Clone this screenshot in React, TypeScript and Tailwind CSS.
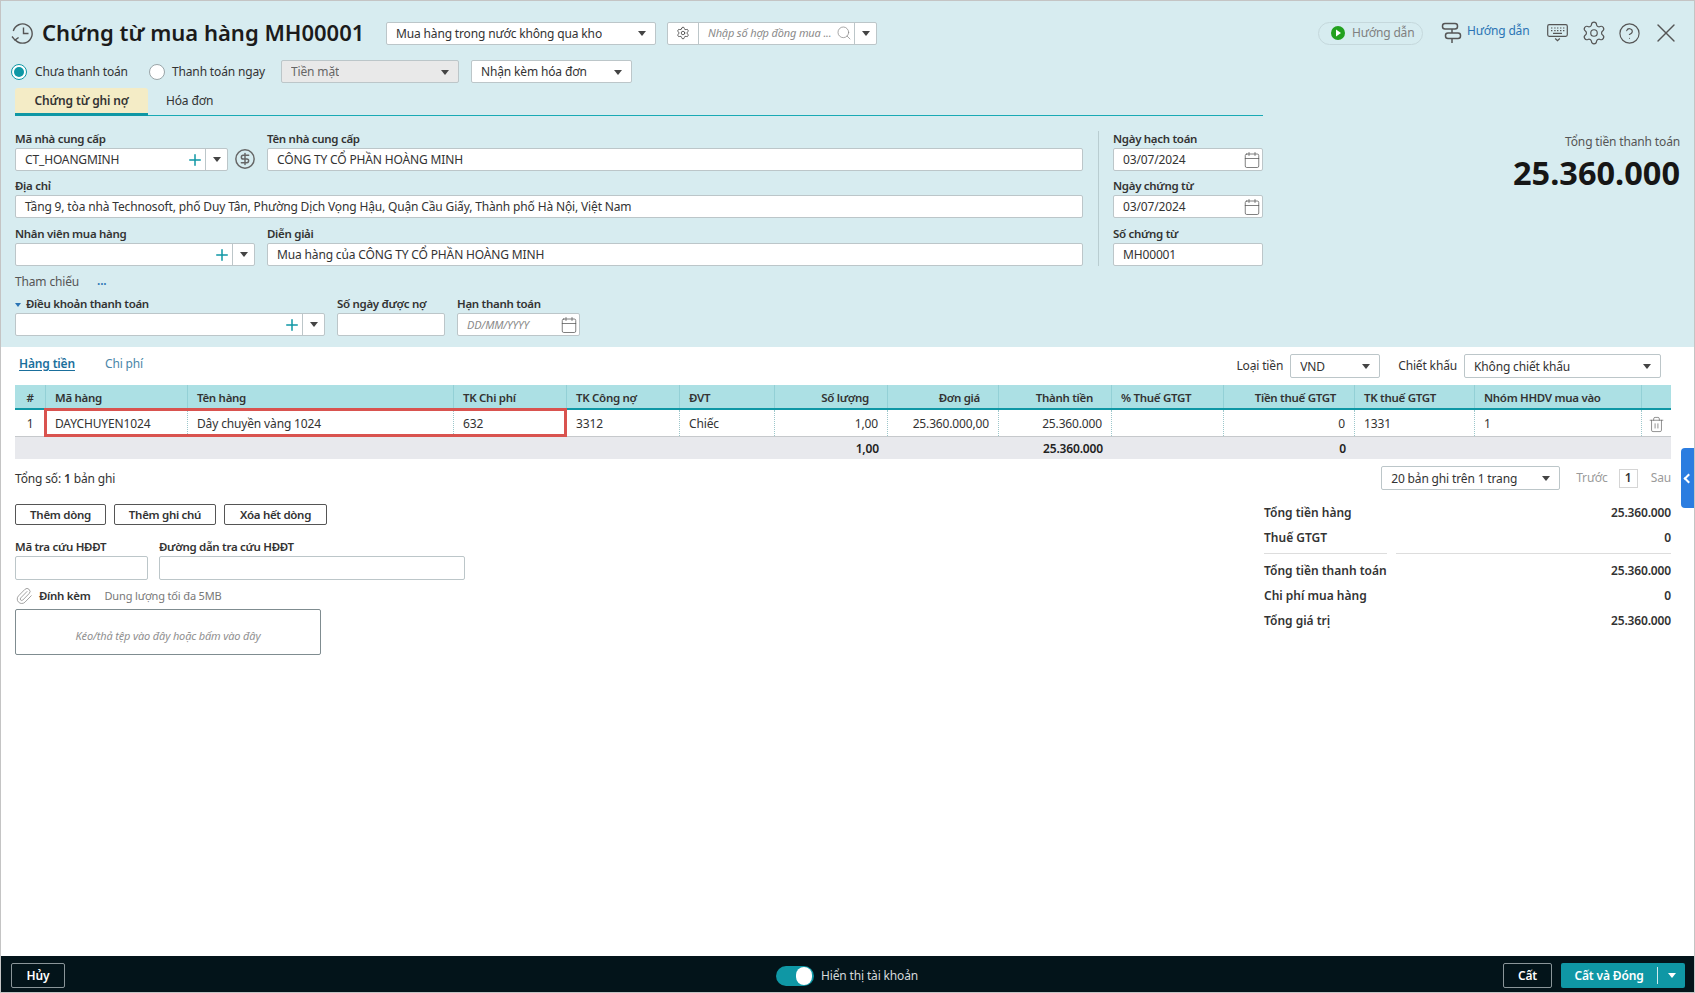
import React, { ReactNode } from "react";
import { Calendar, CircleDollarSign, CircleHelp, Paperclip, Plus, Search, Settings, Trash2, X } from "lucide-react";

const caret = "h-0 w-0 border-x-[4px] border-t-[5px] border-x-transparent border-t-[#444]";

function Caret() {
  return <span className={caret} />;
}

function Label({ children }: { children: ReactNode }) {
  return <div className="h-[17px] -translate-y-px text-[11.5px] leading-[17px] font-semibold tracking-[-0.3px] whitespace-nowrap text-[#333]">{children}</div>;
}

function Box({ className = "", children }: { className?: string; children?: ReactNode }) {
  return (
    <div className={`flex h-[23px] items-center rounded-[2px] border border-[#bcc6c9] bg-white pt-px pl-[9px] text-[#333] ${className}`}>
      {children}
    </div>
  );
}

function SelectBox({ className = "", children }: { className?: string; children: ReactNode }) {
  return (
    <Box className={`justify-between pr-[9px] ${className}`}>
      <span className="truncate">{children}</span>
      <Caret />
    </Box>
  );
}

// combo with the teal plus and a dropdown part on the right
function AddCombo({ className = "", value }: { className?: string; value?: string }) {
  return (
    <Box className={`!pt-0 pr-0 ${className}`}>
      <span className="flex-1 pt-px">{value}</span>
      <Plus size={18} strokeWidth={2} className="mr-[1px] text-[#0f97a5]" />
      <span className="flex h-full w-[22px] items-center justify-center border-l border-[#bcc6c9]">
        <Caret />
      </span>
    </Box>
  );
}

function DateBox({ value, className = "" }: { value?: string; className?: string }) {
  return (
    <Box className={`justify-between pr-[1px] ${className}`}>
      {value ? <span>{value}</span> : <span className="text-[11px] text-[#8a8a8a] italic">DD/MM/YYYY</span>}
      <Calendar size={18} strokeWidth={1} className="text-[#555]" />
    </Box>
  );
}

function HistoryIcon() {
  return (
    <svg width="23" height="22" viewBox="0 0 23 22" fill="none" stroke="#555" strokeWidth="1.4" className="shrink-0">
      <path d="M4 17.5A9.6 9.6 0 1 0 2.3 9" />
      <path d="M1 14.5l3 3.6 3.6-2.6" />
      <path d="M12.5 5.5v6h5" />
    </svg>
  );
}

function SignpostIcon() {
  return (
    <svg width="21" height="22" viewBox="0 0 21 22" fill="none" stroke="#555" strokeWidth="1.5" className="shrink-0">
      <rect x="1.5" y="1.5" width="15" height="5.5" rx="2.5" />
      <rect x="4.5" y="11" width="15" height="5.5" rx="2.5" />
      <path d="M11 7v4M11 16.5V21" />
    </svg>
  );
}

function KeyboardIcon() {
  return (
    <svg width="21" height="18" viewBox="0 0 21 18" fill="none" stroke="#555" strokeWidth="1.2" className="shrink-0">
      <rect x="0.7" y="0.7" width="19.6" height="11.6" rx="1.5" />
      <path d="M4 4h1.4M7.2 4h1.4M10 4h1.4M13 4h1.4M16 4h1.4M4 6.6h1.4M7.2 6.6h1.4M10 6.6h1.4M13 6.6h1.4M16 6.6h1.4M6 9.3h9" />
      <path d="M8.2 14.5l2.3 2.2 2.3-2.2" />
    </svg>
  );
}

function PlayIcon() {
  return (
    <svg width="14" height="14" viewBox="0 0 14 14" className="shrink-0">
      <circle cx="7" cy="7" r="7" fill="#23a11f" />
      <path d="M5 3.6l5 3.4-5 3.4z" fill="#fff" />
    </svg>
  );
}

const columns = [
  { title: "#", value: "1", total: "", align: "center" },
  { title: "Mã hàng", value: "DAYCHUYEN1024", total: "", align: "left" },
  { title: "Tên hàng", value: "Dây chuyền vàng 1024", total: "", align: "left" },
  { title: "TK Chi phí", value: "632", total: "", align: "left" },
  { title: "TK Công nợ", value: "3312", total: "", align: "left" },
  { title: "ĐVT", value: "Chiếc", total: "", align: "left" },
  { title: "Số lượng", value: "1,00", total: "1,00", align: "right" },
  { title: "Đơn giá", value: "25.360.000,00", total: "", align: "right" },
  { title: "Thành tiền", value: "25.360.000", total: "25.360.000", align: "right" },
  { title: "% Thuế GTGT", value: "", total: "", align: "left" },
  { title: "Tiền thuế GTGT", value: "0", total: "0", align: "right" },
  { title: "TK thuế GTGT", value: "1331", total: "", align: "left" },
  { title: "Nhóm HHDV mua vào", value: "1", total: "", align: "left" },
  { title: "", value: "", total: "", align: "center" },
];

const gridCols = "grid grid-cols-[31px_142px_266px_113px_113px_95px_113px_111px_113px_112px_131px_120px_167px_29px]";

function alignClass(align: string) {
  if (align === "right") return "justify-end pr-[9px]";
  if (align === "center") return "justify-center";
  return "justify-start pl-[9px]";
}

function headAlignClass(align: string) {
  if (align === "right") return "justify-end pr-[18px]";
  return alignClass(align);
}

function GoodsTable() {
  return (
    <div className="relative mt-[7px] w-[1656px]">
      <div className={`${gridCols} h-[25px] border-b-2 border-[#0f97a5] bg-[#ace0e4]`}>
        {columns.map((c) => (
          <div key={c.title} className={`flex items-center border-r border-[#93d0d6] pt-[2px] text-[11.5px] font-semibold tracking-[-0.3px] text-[#333] last:border-r-0 ${headAlignClass(c.align)}`}>
            {c.title}
          </div>
        ))}
      </div>
      <div className={`${gridCols} h-[27px] border-b border-[#c6c9cc]`}>
        {columns.map((c, i) => (
          <div key={c.title} className={`flex items-center border-r border-dotted border-[#9cc7cb] pt-[2px] text-[#333] last:border-r-0 ${alignClass(c.align)}`}>
            {i === 13 ? <Trash2 size={17} strokeWidth={1} className="text-[#666]" /> : c.value}
          </div>
        ))}
      </div>
      <div className={`${gridCols} h-[22px] bg-[#e8e9ed]`}>
        {columns.map((c) => (
          <div key={c.title} className={`flex items-center pt-px font-semibold text-[#222] ${alignClass(c.align)}`}>
            {c.total}
          </div>
        ))}
      </div>
      {/* red annotation around the edited cells */}
      <div className="absolute top-[23px] left-[29px] h-[29px] w-[523px] border-[3px] border-[#d9534f]" />
    </div>
  );
}

function SummaryRow({ label, value }: { label: string; value: string }) {
  return (
    <div className="flex h-[25px] items-center justify-between font-semibold text-[#333]">
      <span className="tracking-normal">{label}</span>
      <span>{value}</span>
    </div>
  );
}

function OutlineButton({ children, className = "" }: { children: ReactNode; className?: string }) {
  return (
    <button className={`flex h-[21px] items-center justify-center rounded-[2px] border border-[#555] bg-white pt-px text-[11.5px] font-semibold tracking-[-0.3px] text-[#333] ${className}`}>
      {children}
    </button>
  );
}

export default function App() {
  return (
    <div className="flex h-[993px] w-[1695px] flex-col overflow-hidden border border-[#c4c4c4] font-['Noto_Sans',sans-serif] text-[12px] tracking-[-0.15px] text-[#333]">
      <header className="h-[346px] shrink-0 bg-[#d7ecf0]">
        <div className="mt-[21px] flex h-[22px] items-center pr-[12px] pl-[10px]">
          <HistoryIcon />
          <h1 className="ml-[8px] w-[344px] -translate-y-px text-[22px] leading-none font-semibold tracking-normal whitespace-nowrap text-[#1b1b1b]">Chứng từ mua hàng MH00001</h1>
          <SelectBox className="w-[270px]">Mua hàng trong nước không qua kho</SelectBox>
          <div className="ml-[11px] flex h-[23px] w-[210px] items-center rounded-[2px] border border-[#bcc6c9] bg-white">
            <span className="flex h-full w-[31px] items-center justify-center border-r border-[#bcc6c9]">
              <Settings size={14} strokeWidth={1.4} className="text-[#444]" />
            </span>
            <span className="flex-1 pl-[9px] text-[11px] whitespace-nowrap text-[#8a8a8a] italic">Nhập số hợp đồng mua ...</span>
            <Search size={16} strokeWidth={1.1} className="mr-[2px] shrink-0 text-[#888]" />
            <span className="flex h-full w-[22px] shrink-0 items-center justify-center border-l border-[#bcc6c9]">
              <Caret />
            </span>
          </div>
          <div className="ml-auto flex items-center">
            <div className="flex h-[23px] w-[105px] items-center rounded-full border border-[#c5d8dc] pl-[12px] text-[#808080]">
              <PlayIcon />
              <span className="ml-[7px]">Hướng dẫn</span>
            </div>
            <span className="ml-[18px]"><SignpostIcon /></span>
            <span className="ml-[5px] w-[62px] -translate-y-[2px] whitespace-nowrap text-[#2a74b5]">Hướng dẫn</span>
            <span className="ml-[18px]"><KeyboardIcon /></span>
            <Settings size={26} strokeWidth={1.1} className="ml-[13px] text-[#555]" />
            <CircleHelp size={23} strokeWidth={1.2} className="ml-[11px] text-[#555]" />
            <X size={32} strokeWidth={1} className="ml-[9px] text-[#555]" />
          </div>
        </div>

        <div className="mt-[16px] flex h-[23px] items-center pl-[10px]">
          <span className="flex h-4 w-4 items-center justify-center rounded-full border border-[#0f97a5] bg-white">
            <span className="h-[10px] w-[10px] rounded-full bg-[#0f97a5]" />
          </span>
          <span className="ml-[8px] w-[114px]">Chưa thanh toán</span>
          <span className="h-4 w-4 rounded-full border border-[#9aa5a8] bg-white" />
          <span className="ml-[7px] w-[109px]">Thanh toán ngay</span>
          <SelectBox className="w-[178px] !bg-[#e9e9e9] !text-[#666]">Tiền mặt</SelectBox>
          <SelectBox className="ml-[12px] w-[161px]">Nhận kèm hóa đơn</SelectBox>
        </div>

        <div className="flex">
          <div className="ml-[14px] w-[1248px]">
            <div className="mt-[5px] flex h-[28px] border-b border-[#19aab5]">
              <div className="flex h-[28px] w-[133px] items-center justify-center rounded-t-[3px] border-b-[3px] border-[#0f97a5] bg-[#f4ecc6] font-semibold">Chứng từ ghi nợ</div>
              <div className="ml-[18px] flex h-[26px] items-center">Hóa đơn</div>
            </div>

            <div className="mt-[15px] flex">
              <div className="flex w-[1068px] flex-col gap-[7px]">
                <div className="flex">
                  <div className="w-[213px]">
                    <Label>Mã nhà cung cấp</Label>
                    <AddCombo value="CT_HOANGMINH" />
                  </div>
                  <div className="flex w-[39px] items-end justify-start pb-[1px] pl-[6px]">
                    <CircleDollarSign size={22} strokeWidth={1.6} className="text-[#666]" />
                  </div>
                  <div className="flex-1">
                    <Label>Tên nhà cung cấp</Label>
                    <Box>CÔNG TY CỔ PHẦN HOÀNG MINH</Box>
                  </div>
                </div>
                <div>
                  <Label>Địa chỉ</Label>
                  <Box>Tầng 9, tòa nhà Technosoft, phố Duy Tân, Phường Dịch Vọng Hậu, Quận Cầu Giấy, Thành phố Hà Nội, Việt Nam</Box>
                </div>
                <div className="mt-px flex">
                  <div className="w-[240px]">
                    <Label>Nhân viên mua hàng</Label>
                    <AddCombo />
                  </div>
                  <div className="ml-[12px] flex-1">
                    <Label>Diễn giải</Label>
                    <Box>Mua hàng của CÔNG TY CỔ PHẦN HOÀNG MINH</Box>
                  </div>
                </div>
              </div>
              <div className="ml-[15px] border-l border-[#b9cdd1]" />
              <div className="ml-[14px] flex w-[150px] flex-col gap-[7px]">
                <div>
                  <Label>Ngày hạch toán</Label>
                  <DateBox value="03/07/2024" />
                </div>
                <div>
                  <Label>Ngày chứng từ</Label>
                  <DateBox value="03/07/2024" />
                </div>
                <div className="mt-px">
                  <Label>Số chứng từ</Label>
                  <Box>MH00001</Box>
                </div>
              </div>
            </div>

            <div className="mt-[6px] flex h-[20px] items-center">
              <span className="w-[82px] text-[#555]">Tham chiếu</span>
              <span className="-translate-y-[1px] font-semibold text-[#2a74b5]">...</span>
            </div>

            <div className="mt-[4px] flex">
              <div className="w-[310px]">
                <div className="flex items-center">
                  <span className="mr-[5px] h-0 w-0 border-x-[3px] border-t-[4px] border-x-transparent border-t-[#2a74b5]" />
                  <Label>Điều khoản thanh toán</Label>
                </div>
                <AddCombo />
              </div>
              <div className="ml-[12px] w-[108px]">
                <Label>Số ngày được nợ</Label>
                <Box />
              </div>
              <div className="ml-[12px] w-[123px]">
                <Label>Hạn thanh toán</Label>
                <DateBox />
              </div>
            </div>
          </div>

          <div className="flex-1 pt-[50px] pr-[14px] text-right">
            <div className="leading-[18px] text-[#555]">Tổng tiền thanh toán</div>
            <div className="mt-[4px] text-[32.5px] leading-[36px] font-bold tracking-normal text-[#161616]">25.360.000</div>
          </div>
        </div>
      </header>

      <main className="relative flex-1 bg-white pr-[23px] pl-[14px]">
        <div className="mt-[7px] flex h-[24px] items-center">
          <span className="ml-[4px] -translate-y-[2px] font-semibold text-[#1a6f9c] underline underline-offset-2">Hàng tiền</span>
          <span className="ml-[30px] -translate-y-[2px] text-[#4a86a8]">Chi phí</span>
          <div className="ml-auto flex items-center pr-[10px]">
            <span>Loại tiền</span>
            <SelectBox className="ml-[7px] !h-[24px] w-[90px]">VND</SelectBox>
            <span className="ml-[18px]">Chiết khấu</span>
            <SelectBox className="ml-[7px] !h-[24px] w-[197px]">Không chiết khấu</SelectBox>
          </div>
        </div>

        <GoodsTable />

        <div className="mt-[7px] flex h-[24px] items-center">
          <span className="pt-[2px]">Tổng số: <b className="font-semibold">1</b> bản ghi</span>
          <div className="ml-auto flex items-center">
            <SelectBox className="!h-[24px] w-[179px]">20 bản ghi trên 1 trang</SelectBox>
            <span className="ml-[16px] text-[#9a9a9a]">Trước</span>
            <span className="ml-[11px] flex h-[19px] w-[19px] items-center justify-center border border-[#d5d5d5] font-semibold">1</span>
            <span className="ml-[13px] text-[#9a9a9a]">Sau</span>
          </div>
        </div>

        <div className="flex justify-between">
          <div className="pt-[14px]">
            <div className="flex gap-[8px]">
              <OutlineButton className="w-[91px]">Thêm dòng</OutlineButton>
              <OutlineButton className="w-[102px]">Thêm ghi chú</OutlineButton>
              <OutlineButton className="w-[103px]">Xóa hết dòng</OutlineButton>
            </div>
            <div className="mt-[14px] flex gap-[11px]">
              <div className="w-[133px]">
                <Label>Mã tra cứu HĐĐT</Label>
                <Box className="!h-[24px]" />
              </div>
              <div className="w-[306px]">
                <Label>Đường dẫn tra cứu HĐĐT</Label>
                <Box className="!h-[24px]" />
              </div>
            </div>
            <div className="mt-[8px] flex h-[16px] items-center">
              <Paperclip size={18} strokeWidth={1.2} className="text-[#999]" />
              <span className="ml-[6px] text-[11.5px] font-semibold tracking-[-0.3px]">Đính kèm</span>
              <span className="ml-[14px] text-[11px] text-[#777]">Dung lượng tối đa 5MB</span>
            </div>
            <div className="mt-[5px] flex h-[46px] w-[306px] items-center justify-center rounded-[2px] border border-[#7f8c90] pt-[8px] text-[11px] text-[#8f8f8f] italic">
              Kéo/thả tệp vào đây hoặc bấm vào đây
            </div>
          </div>

          <div className="w-[407px] pt-[10px]">
            <SummaryRow label="Tổng tiền hàng" value="25.360.000" />
            <SummaryRow label="Thuế GTGT" value="0" />
            <div className="mt-[3px] mb-[4px] flex justify-between">
              <span className="h-px w-[123px] bg-[#ddd]" />
              <span className="h-px w-[275px] bg-[#ddd]" />
            </div>
            <SummaryRow label="Tổng tiền thanh toán" value="25.360.000" />
            <SummaryRow label="Chi phí mua hàng" value="0" />
            <SummaryRow label="Tổng giá trị" value="25.360.000" />
          </div>
        </div>

        {/* collapsed side panel handle */}
        <div className="absolute top-[101px] right-0 flex h-[60px] w-[13px] items-center justify-center rounded-l-[4px] bg-[#2b7de0] text-white">
          <span className="h-[7px] w-[7px] translate-x-[1px] rotate-45 border-b-2 border-l-2 border-white" />
        </div>
      </main>

      <footer className="flex h-[36px] shrink-0 items-center bg-[#03141a] pt-[3px] pr-[9px] pl-[10px]">
        <button className="flex h-[25px] w-[54px] items-center justify-center rounded-[2px] border border-[#8a9599] font-semibold text-white">Hủy</button>
        <div className="ml-[711px] flex items-center">
          <span className="flex h-[20px] w-[38px] items-center justify-end rounded-full bg-[#0f97a5] pr-[2px]">
            <span className="h-[18px] w-[16px] rounded-full bg-white" />
          </span>
          <span className="ml-[7px] text-[#d5d9da]">Hiển thị tài khoản</span>
        </div>
        <button className="ml-auto flex h-[25px] w-[49px] items-center justify-center rounded-[2px] border border-[#8a9599] font-semibold text-white">Cất</button>
        <div className="ml-[9px] flex h-[25px] w-[124px] items-center rounded-[2px] bg-[#0f97a5] font-semibold text-white">
          <span className="flex-1 text-center">Cất và Đóng</span>
          <span className="h-[17px] w-px bg-white/80" />
          <span className="flex w-[27px] justify-center">
            <span className="h-0 w-0 border-x-[4px] border-t-[5px] border-x-transparent border-t-white" />
          </span>
        </div>
      </footer>
    </div>
  );
}
